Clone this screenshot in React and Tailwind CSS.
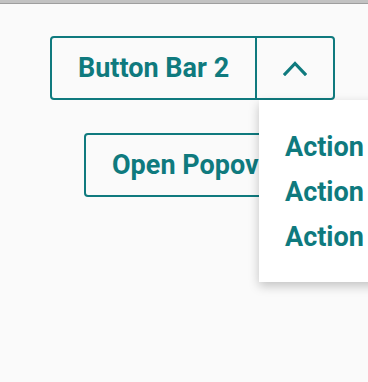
import React from "react";

export default function App() {
  const teal = "text-[#0f7a7e]";
  return (
    <div
      className="relative w-[368px] h-[382px] overflow-hidden bg-[#fafafa]"
      style={{ fontFamily: "Roboto, 'Liberation Sans', sans-serif" }}
    >
      <div className="h-[3px] bg-[#c2c2c2] border-b border-[#9e9e9e] box-content" />
      <div className="flex flex-col items-start pl-[50px] pt-[32px]">
        <div className="flex h-[64px] rounded-[4px] border-2 border-[#0f7a7e]">
          <button
            className={`flex items-center h-full pl-[26px] pr-[26px] text-[27px] font-bold ${teal} whitespace-nowrap`}
          >
            Button Bar 2
          </button>
          <div className="w-[2px] bg-[#0f7a7e]" />
          <button className="flex items-center justify-center w-[76px] h-full">
            <svg width="24" height="16" viewBox="0 0 24 16" fill="none">
              <path
                d="M2 14 L12 3.5 L22 14"
                stroke="#0f7a7e"
                strokeWidth="3.2"
                strokeLinecap="square"
                strokeLinejoin="miter"
              />
            </svg>
          </button>
        </div>
        <button
          className={`ml-[34px] mt-[33px] flex items-center h-[64px] rounded-[4px] border-2 border-[#0f7a7e] px-[26px] text-[27px] font-bold ${teal} whitespace-nowrap`}
        >
          Open Popover
        </button>
      </div>
      <div className="absolute left-[259px] top-[100px] w-[150px] h-[182px] bg-white shadow-[0_4px_10px_rgba(0,0,0,0.22)] pl-[26px] pt-[25px]">
        {["Action 1", "Action 2", "Action 3"].map((a) => (
          <div
            key={a}
            className={`h-[45px] leading-[45px] text-[27px] font-bold ${teal} whitespace-nowrap`}
          >
            {a}
          </div>
        ))}
      </div>
    </div>
  );
}
